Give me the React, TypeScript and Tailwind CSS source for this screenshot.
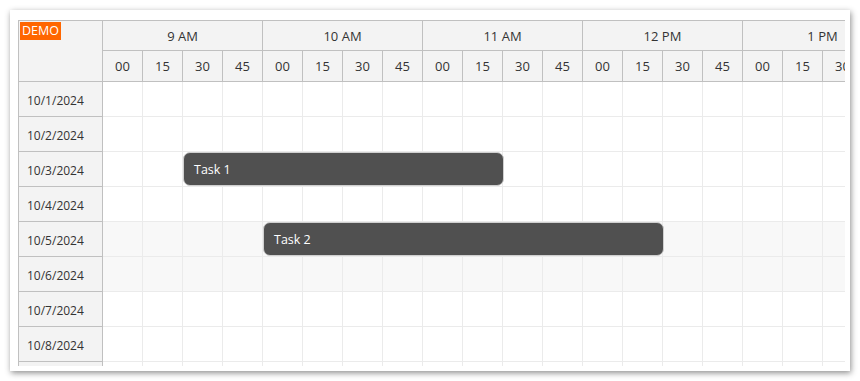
const HOURS = ["9 AM", "10 AM", "11 AM", "12 PM", "1 PM"];
const MINUTES = ["00", "15", "30", "45"];
const DAYS = [1, 2, 3, 4, 5, 6, 7, 8, 9].map((d) => ({ label: `10/${d}/2024`, weekend: d === 5 || d === 6 }));
const TASKS = [
  { name: "Task 1", row: 2, start: 2, span: 8 },
  { name: "Task 2", row: 4, start: 4, span: 10 },
];

export default function App() {
  const font = { fontFamily: '"Segoe UI", "Open Sans", "Noto Sans", sans-serif' };
  return (
    <div className="w-[860px] h-[381px] bg-white pl-[10px] pt-[10px]" style={font}>
      <div className="w-[840px] h-[361px] bg-white shadow-[1px_2px_6px_rgba(0,0,0,0.45)] pl-[8px] pt-[10px]">
        <div className="relative w-[827px] h-[346px] overflow-hidden border-l border-t border-[#c0c0c0] flex text-[13px] text-[#333]">
          {/* row headers */}
          <div className="w-[84px] shrink-0 flex flex-col border-r border-[#c0c0c0] bg-[#f3f3f3]">
            <div className="relative h-[61px] shrink-0 border-b border-[#c0c0c0]">
              <span className="absolute left-[1px] top-[1px] bg-[#ff6600] text-white px-[2px] leading-[18px] text-[12.5px]">DEMO</span>
            </div>
            {DAYS.map((d) => (
              <div key={d.label} className="h-[35px] shrink-0 border-b border-[#c0c0c0] flex items-center pl-[8px] pt-[3px] text-[12px]">
                {d.label}
              </div>
            ))}
          </div>

          {/* time area */}
          <div className="relative flex-1 overflow-hidden">
            <div className="w-[800px] flex flex-col">
              <div className="flex h-[30px] bg-[#f3f3f3] border-b border-[#c0c0c0]">
                {HOURS.map((h) => (
                  <div key={h} className="w-[160px] shrink-0 border-r border-[#c0c0c0] flex items-center justify-center pt-[2px]">
                    {h}
                  </div>
                ))}
              </div>
              <div className="flex h-[31px] bg-[#f3f3f3] border-b border-[#c0c0c0]">
                {HOURS.flatMap((h) =>
                  MINUTES.map((m) => (
                    <div key={h + m} className="w-[40px] shrink-0 border-r border-[#c0c0c0] flex items-center justify-center pt-[2px]">
                      {m}
                    </div>
                  ))
                )}
              </div>
              <div className="relative">
                {DAYS.map((d) => (
                  <div key={d.label} className={`flex h-[35px] border-b border-[#ebebeb] ${d.weekend ? "bg-[#f8f8f8]" : "bg-white"}`}>
                    {Array.from({ length: 20 }).map((_, i) => (
                      <div key={i} className="w-[40px] shrink-0 border-r border-[#ebebeb]" />
                    ))}
                  </div>
                ))}
                {TASKS.map((t) => (
                  <div
                    key={t.name}
                    className="absolute h-[34px] rounded-[7px] bg-[#505050] border border-[#d0d0d0] text-white text-[12.5px] flex items-center pl-[10px] pt-[2px]"
                    style={{ left: t.start * 40, width: t.span * 40 + 1, top: t.row * 35 }}
                  >
                    {t.name}
                  </div>
                ))}
              </div>
            </div>
          </div>
        </div>
      </div>
    </div>
  );
}
